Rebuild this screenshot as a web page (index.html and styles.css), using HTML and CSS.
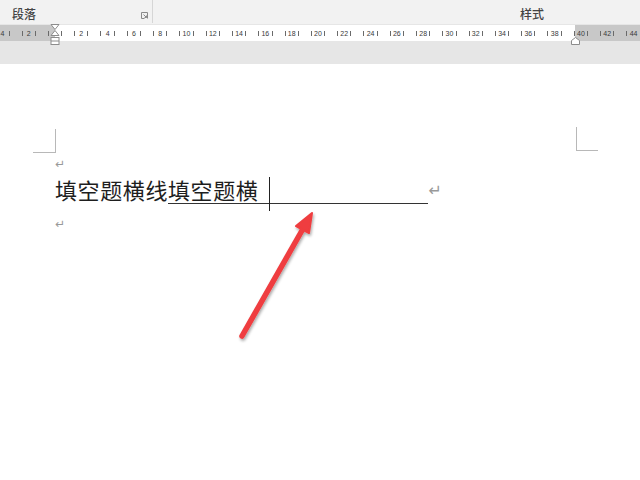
FILE: index.html
```html
<!DOCTYPE html>
<html lang="zh">
<head>
<meta charset="utf-8">
<link rel="stylesheet" href="styles.css">
</head>
<body>
<div class="ribbon">
  <div class="group group-para">
    <span class="group-label">段落</span>
    <svg class="launcher" width="7" height="7" viewBox="0 0 7 7"><path d="M0.5 0.5h6v6" fill="none" stroke="#8a8a8a" stroke-width="1"/><path d="M0.5 0.5v6h3" fill="none" stroke="#8a8a8a"/><path d="M2.5 2.5l3 3M5.5 3.5v2h-2" fill="none" stroke="#8a8a8a"/></svg>
  </div>
  <div class="group group-style">
    <span class="group-label">样式</span>
  </div>
</div>
<div class="ruler">
  <div class="ticks">
    <span class="c">4</span><span class="c">2</span><span class="c"></span><span class="c">2</span><span class="c">4</span><span class="c">6</span><span class="c">8</span><span class="c">10</span><span class="c">12</span><span class="c">14</span><span class="c">16</span><span class="c">18</span><span class="c">20</span><span class="c">22</span><span class="c">24</span><span class="c">26</span><span class="c">28</span><span class="c">30</span><span class="c">32</span><span class="c">34</span><span class="c">36</span><span class="c">38</span><span class="c">40</span><span class="c">42</span><span class="c">44</span>
  </div>
  <svg class="indent-left" width="10" height="24" viewBox="0 0 10 24"><path d="M1 0.5h8l-4 5z" fill="#fff" stroke="#8c8c8c"/><path d="M5 6.5l4 5h-8z" fill="#fff" stroke="#8c8c8c"/><rect x="1" y="13.5" width="8" height="7" fill="#fff" stroke="#8c8c8c"/><path d="M1 17h8" stroke="#8c8c8c"/></svg>
  <svg class="indent-right" width="9" height="8" viewBox="0 0 9 8"><path d="M0.5 7.5v-4l4-3 4 3v4z" fill="#fff" stroke="#8c8c8c"/></svg>
</div>
<div class="band"></div>
<div class="page">
  <div class="corners">
    <div class="corner corner-left"></div>
    <div class="corner corner-right"></div>
  </div>
  <div class="body-text">
    <p class="para small"><span class="ret">↵</span></p>
    <p class="para line">填空题横线<span class="blank">填空题横<span class="caret"></span><span class="fill"></span></span><span class="ret ret-line">↵</span></p>
    <p class="para small last"><span class="ret">↵</span></p>
  </div>
  <svg class="arrow" width="100" height="150" viewBox="0 0 100 150">
    <defs>
      <filter id="sh" x="-30%" y="-30%" width="160%" height="160%"><feGaussianBlur in="SourceAlpha" stdDeviation="1.5"/><feOffset dx="1" dy="2" result="b"/><feComponentTransfer><feFuncA type="linear" slope="0.35"/></feComponentTransfer><feMerge><feMergeNode/><feMergeNode in="SourceGraphic"/></feMerge></filter>
    </defs>
    <g filter="url(#sh)">
      <path d="M12 137L74 28" stroke="#ef3d3f" stroke-width="5.5" stroke-linecap="round"/>
      <path d="M82 14L66 27L79 34Z" fill="#ef3d3f" stroke="#ef3d3f" stroke-width="2" stroke-linejoin="round"/>
    </g>
  </svg>
</div>
</body>
</html>
```
FILE: styles.css
```css
html, body {
  margin: 0;
  padding: 0;
  background: #ffffff;
  font-family: "Noto Sans CJK SC", "Noto Sans", sans-serif;
}

body {
  width: 640px;
  height: 480px;
  overflow: hidden;
}

.ribbon {
  height: 25px;
  background: #f2f2f2;
  display: flex;
  border-bottom: 1px solid #e6e6e6;
  box-sizing: border-box;
}

.group {
  display: flex;
  align-items: center;
  height: 23px;
}

.group-para {
  width: 153px;
  border-right: 1px solid #d6d6d6;
  padding-left: 12px;
  box-sizing: border-box;
  justify-content: space-between;
  padding-right: 4px;
}

.group-label {
  font-size: 12px;
  color: #444;
  font-weight: 500;
  line-height: 1;
  padding-top: 4px;
}

.launcher {
  margin-top: 7px;
}

.group-style {
  padding-left: 367px;
}

.ruler {
  position: relative;
  height: 16px;
  background: linear-gradient(to right, #c8c8c8 0 55px, #ffffff 55px 575px, #c8c8c8 575px);
  overflow: visible;
}

.ticks {
  display: flex;
  margin-left: -10.75px;
  height: 16px;
  align-items: center;
}

.c {
  flex: 0 0 26.3px;
  display: flex;
  justify-content: space-between;
  align-items: center;
  padding: 0 6px;
  box-sizing: border-box;
  font-family: "Liberation Sans", sans-serif;
  font-size: 7px;
  color: #3a3a3a;
  line-height: 1;
}

.c::before, .c::after {
  content: "";
  width: 1px;
  height: 5px;
  background: #6a6a6a;
}

.indent-left {
  position: absolute;
  left: 50px;
  top: -1px;
}

.indent-right {
  position: absolute;
  left: 571px;
  top: 12px;
}

.band {
  height: 23px;
  background: #e6e6e6;
}

.page {
  position: relative;
  background: #fff;
  height: 416px;
}

.corners {
  display: flex;
  justify-content: space-between;
  padding: 65px 42px 0 33px;
}

.corner {
  border-bottom: 1px solid #b8b8b8;
}

.corner-left {
  width: 22px;
  height: 23px;
  border-right: 1px solid #b8b8b8;
}

.corner-right {
  width: 21px;
  height: 23px;
  margin-top: -2px;
  border-left: 1px solid #b8b8b8;
}

.body-text {
  padding-left: 55px;
}

.para {
  margin: 0;
}

.small {
  height: 16px;
  line-height: 16px;
}

.small.last {
  margin-top: 4px;
}

.ret {
  font-family: "DejaVu Sans", sans-serif;
  font-size: 12px;
  color: #999;
}

.line {
  font-size: 22px;
  letter-spacing: 0.6px;
  color: #1e1e1e;
  height: 40px;
  line-height: 40px;
  white-space: nowrap;
}

.blank {
  display: inline-block;
  line-height: 27px;
  border-bottom: 1.5px solid #333;
  vertical-align: baseline;
}

.caret {
  display: inline-block;
  width: 1px;
  height: 34px;
  background: #222;
  margin-left: 11px;
  margin-top: -20px;
  margin-bottom: -12px;
  vertical-align: baseline;
}

.fill {
  display: inline-block;
  width: 158px;
  height: 0;
}

.ret-line {
  font-size: 16px;
  letter-spacing: 0;
  vertical-align: 3px;
  margin-left: 0;
}

.arrow {
  position: absolute;
  left: 230px;
  top: 135px;
}
```
